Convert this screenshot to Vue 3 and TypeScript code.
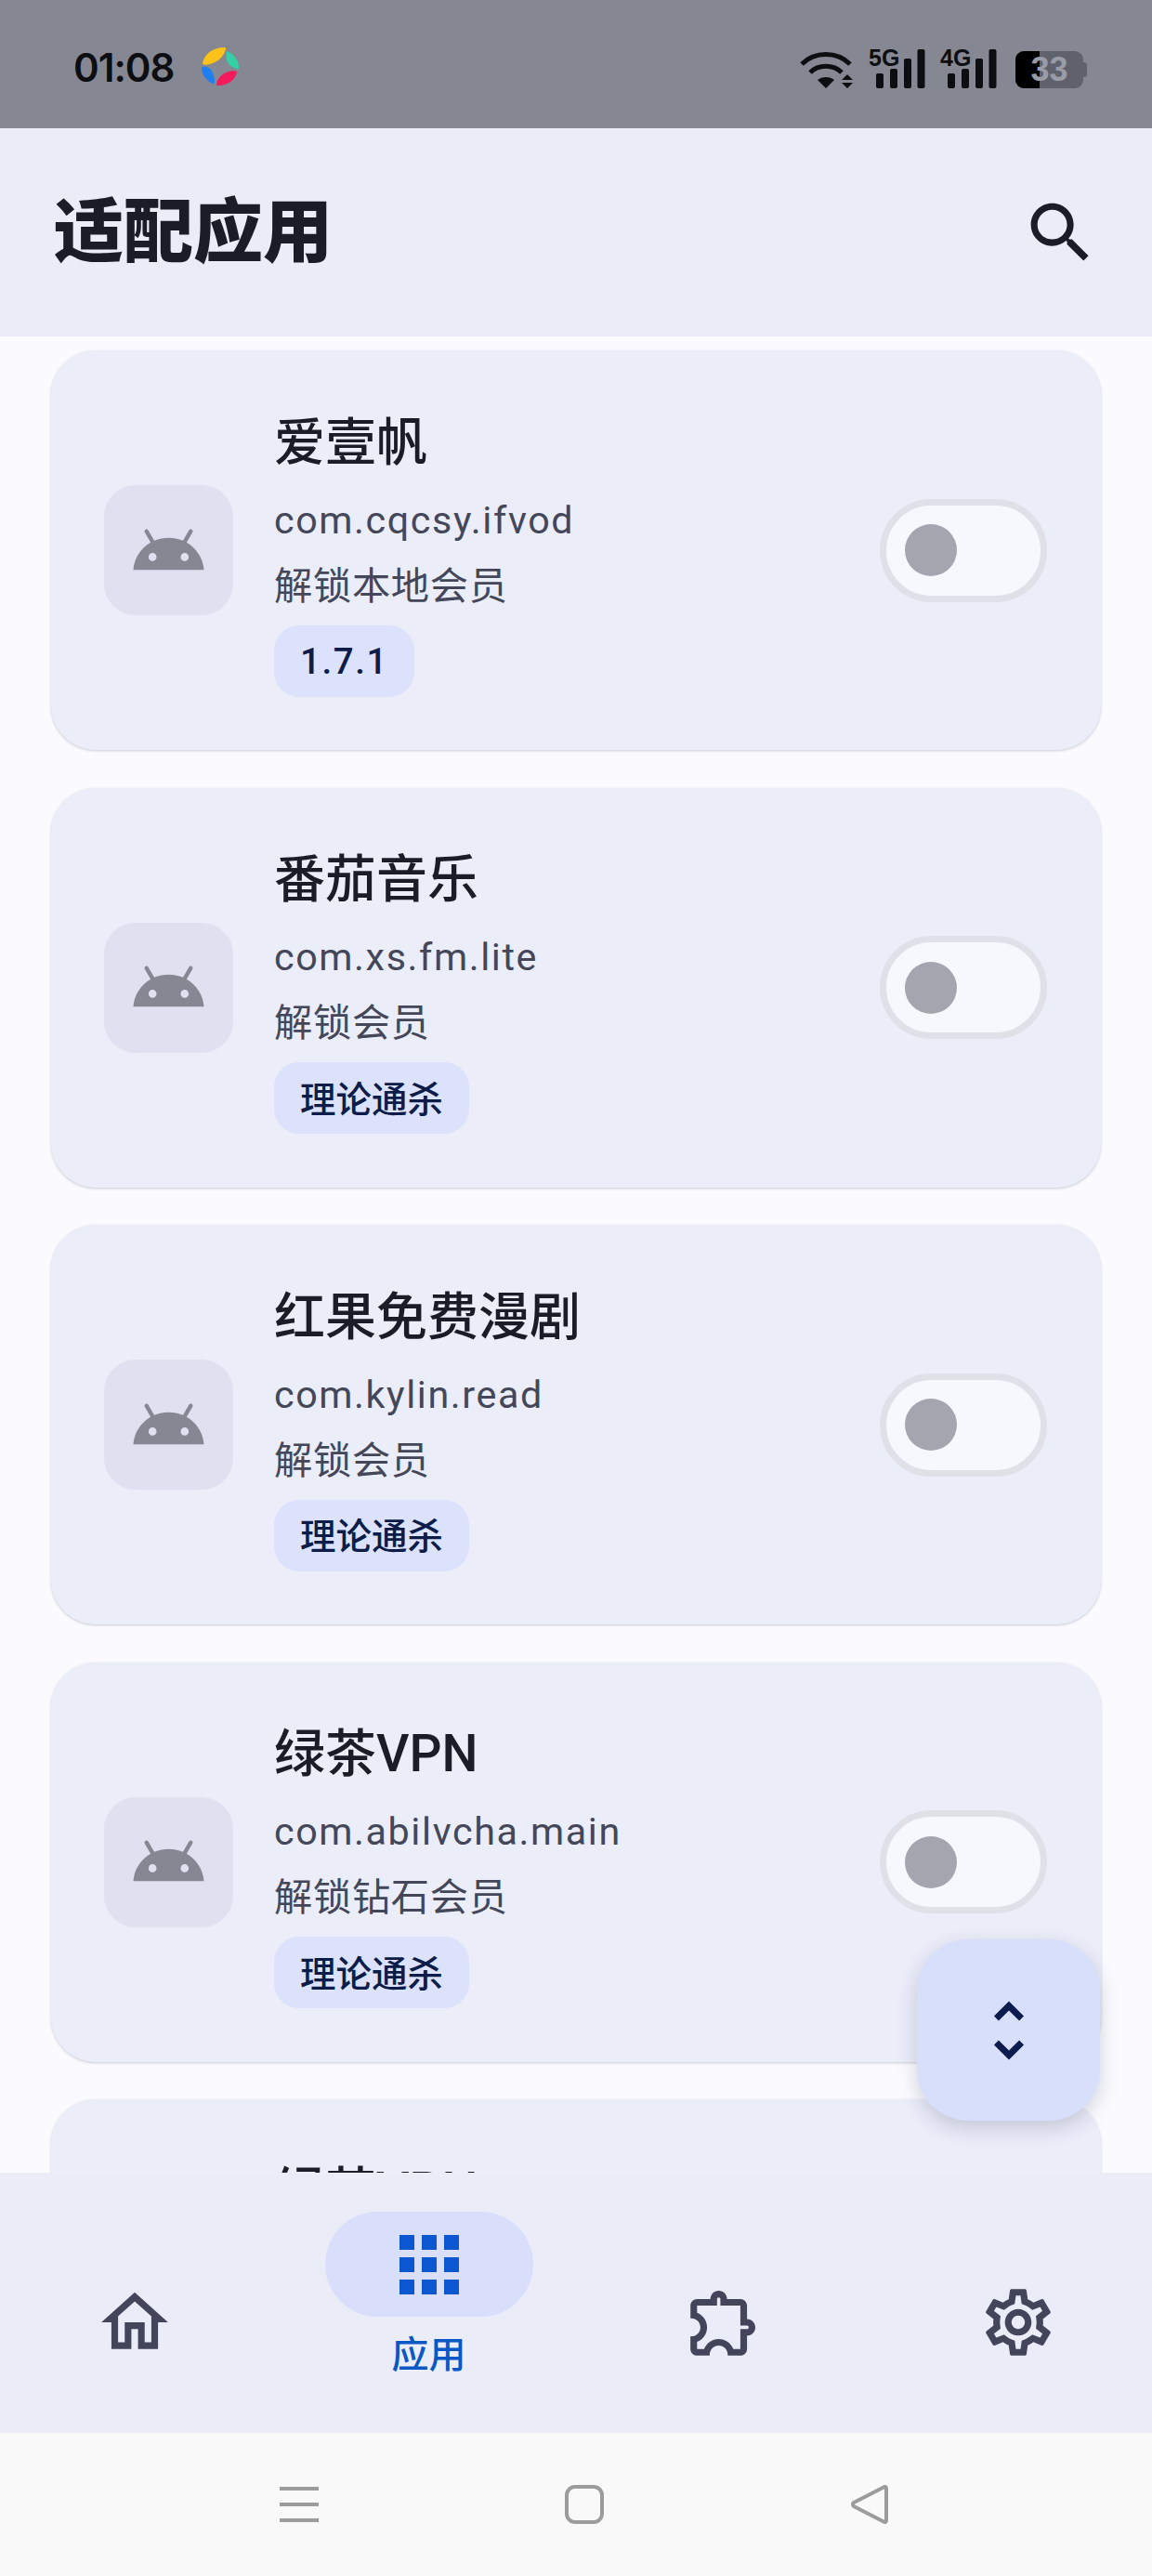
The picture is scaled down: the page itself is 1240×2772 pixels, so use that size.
<script setup lang="ts">
interface AppItem {
  name: string;
  pkg?: string;
  desc?: string;
  tag?: string;
}

const apps: AppItem[] = [
  { name: '爱壹帆', pkg: 'com.cqcsy.ifvod', desc: '解锁本地会员', tag: '1.7.1' },
  { name: '番茄音乐', pkg: 'com.xs.fm.lite', desc: '解锁会员', tag: '理论通杀' },
  { name: '红果免费漫剧', pkg: 'com.kylin.read', desc: '解锁会员', tag: '理论通杀' },
  { name: '绿茶VPN', pkg: 'com.abilvcha.main', desc: '解锁钻石会员', tag: '理论通杀' },
  // only the top of this one is visible above the nav bar
  { name: '绿茶VPN' }
];

const signals = ['5G', '4G'];
const bars = [
  { x: 8, h: 16 },
  { x: 23, h: 21 },
  { x: 38, h: 32 },
  { x: 52.5, h: 42 }
];

const isVersion = (tag: string) => /^[\d.]+$/.test(tag);
</script>

<template>
  <div class="phone">
    <header class="status-bar">
      <div class="status-left">
        <span class="time">01:08</span>
        <svg class="app-logo" viewBox="0 0 40 42">
          <path fill="#fbc21a" d="M1 19C2 9 11 1 25 1c1 0 2 1 1 2-2 8-9 14-17 16-3 1-6 1-8 0z" />
          <path fill="#35cfa6" d="M27 5c8 3 13 10 13 18 0 1-1 2-2 1-4-1-8-3-10-7-2-4-2-8-1-12z" />
          <path fill="#1f7ff0" d="M0 22c4-1 8 0 10 3 3 4 4 9 4 14 0 1-1 1-2 1C5 37 0 30 0 22z" />
          <path fill="#f41b5c" d="M16 41c1-7 6-12 13-14 4-1 7-1 9 0-1 8-9 15-20 15-1 0-2 0-2-1z" />
        </svg>
      </div>
      <div class="status-right">
        <svg class="wifi" viewBox="0 0 58 42">
          <path class="wifi-arc" d="M2 16C16 2 40 2 54 16" />
          <path class="wifi-arc" d="M11 25C20 16 36 16 45 25" />
          <path fill="#0d0e12" d="M19 33c5-4 13-4 18 0l-9 9z" />
          <path fill="#0d0e12" d="M45 33l6-6 6 6zM45 36h12l-6 6z" />
        </svg>
        <div v-for="s in signals" :key="s" class="signal">
          <span class="signal-label">{{ s }}</span>
          <svg viewBox="0 0 61 43">
            <rect v-for="b in bars" :key="b.x" :x="b.x" :y="43 - b.h" width="8" :height="b.h" rx="2" fill="#0d0e12" />
          </svg>
        </div>
        <div class="battery">
          <div class="battery-fill"></div>
          <span class="battery-text">33</span>
          <i class="battery-cap"></i>
        </div>
      </div>
    </header>

    <div class="top-bar">
      <h1 class="page-title">适配应用</h1>
      <svg class="search-icon" viewBox="0 0 24 24">
        <path d="M15.5 14h-.79l-.28-.27C15.41 12.59 16 11.11 16 9.5 16 5.91 13.09 3 9.5 3S3 5.91 3 9.5 5.91 16 9.5 16c1.61 0 3.09-.59 4.23-1.57l.27.28v.79l5 4.99L20.49 19l-4.99-5zm-6 0C7.01 14 5 11.99 5 9.5S7.01 5 9.5 5 14 7.01 14 9.5 11.99 14 9.5 14z" />
      </svg>
    </div>

    <main class="app-list">
      <section v-for="(app, i) in apps" :key="i" class="app-card">
        <div class="app-icon">
          <svg viewBox="0 0 24 24">
            <path d="M17.6 9.48l1.84-3.18c.16-.31.04-.69-.26-.85-.29-.15-.65-.06-.83.22l-1.88 3.24c-2.86-1.21-6.08-1.21-8.94 0L5.65 5.67c-.19-.29-.58-.38-.87-.2-.28.18-.37.54-.22.83L6.4 9.48C3.3 11.25 1.28 14.44 1 18h22c-.28-3.56-2.3-6.75-5.4-8.52zM7 15.25c-.69 0-1.25-.56-1.25-1.25s.56-1.25 1.25-1.25 1.25.56 1.25 1.25-.56 1.25-1.25 1.25zm10 0c-.69 0-1.25-.56-1.25-1.25s.56-1.25 1.25-1.25 1.25.56 1.25 1.25-.56 1.25-1.25 1.25z" />
          </svg>
        </div>
        <div class="app-info">
          <div class="app-name">{{ app.name }}</div>
          <div v-if="app.pkg" class="app-pkg">{{ app.pkg }}</div>
          <div v-if="app.desc" class="app-desc">{{ app.desc }}</div>
          <span v-if="app.tag" class="app-tag" :class="{ version: isVersion(app.tag) }">{{ app.tag }}</span>
        </div>
        <div class="switch"><i class="switch-thumb"></i></div>
      </section>
    </main>

    <button class="fab">
      <svg viewBox="0 0 24 24">
        <path d="M12 5.830L15.17 9l1.41-1.41L12 3 7.41 7.59 8.83 9 12 5.83zm0 12.34L8.83 15l-1.41 1.41L12 21l4.59-4.59L15.17 15 12 18.17z" />
      </svg>
    </button>

    <nav class="bottom-nav">
      <div class="nav-item">
        <svg class="nav-icon" viewBox="0 0 24 24">
          <path d="M12 5.69l5 4.5V18h-2v-6H9v6H7v-7.81l5-4.5M12 3L2 12h3v8h6v-6h2v6h6v-8h3L12 3z" />
        </svg>
      </div>
      <div class="nav-item active">
        <div class="nav-pill">
          <svg viewBox="0 0 24 24">
            <path d="M4 8h4V4H4v4zm6 12h4v-4h-4v4zm-6 0h4v-4H4v4zm0-6h4v-4H4v4zm6 0h4v-4h-4v4zm6-10v4h4V4h-4zm-6 4h4V4h-4v4zm6 6h4v-4h-4v4zm0 6h4v-4h-4v4z" />
          </svg>
        </div>
        <span class="nav-label">应用</span>
      </div>
      <div class="nav-item">
        <svg class="nav-icon" viewBox="0 0 24 24">
          <path d="M10.5 4.5c.28 0 .5.22.5.5v2h6v6h2c.28 0 .5.22.5.5s-.22.5-.5.5h-2v6h-2.12c-.68-1.75-2.39-3-4.38-3s-3.7 1.25-4.38 3H4v-2.12c1.75-.68 3-2.39 3-4.38 0-1.99-1.24-3.7-2.99-4.38L4 7h6V5c0-.28.22-.5.5-.5m0-2C9.12 2.5 8 3.62 8 5H4c-1.1 0-1.99.9-1.99 2v3.8h.29c1.49 0 2.7 1.21 2.7 2.7s-1.21 2.7-2.7 2.7H2V20c0 1.1.9 2 2 2h3.8v-.3c0-1.49 1.21-2.7 2.7-2.7s2.7 1.21 2.7 2.7v.3H17c1.1 0 2-.9 2-2v-4c1.38 0 2.5-1.12 2.5-2.5S20.38 11 19 11V7c0-1.1-.9-2-2-2h-4c0-1.38-1.12-2.5-2.5-2.5z" />
        </svg>
      </div>
      <div class="nav-item">
        <svg class="nav-icon" viewBox="0 0 24 24">
          <path d="M19.43 12.98c.04-.32.07-.64.07-.98 0-.34-.03-.66-.07-.98l2.11-1.65c.19-.15.24-.42.12-.64l-2-3.46c-.09-.16-.26-.25-.44-.25-.06 0-.12.01-.17.03l-2.49 1c-.52-.4-1.08-.73-1.69-.98l-.38-2.65C14.46 2.18 14.25 2 14 2h-4c-.25 0-.46.18-.49.42l-.38 2.65c-.61.25-1.17.59-1.69.98l-2.49-1c-.06-.02-.12-.03-.18-.03-.17 0-.34.09-.43.25l-2 3.46c-.13.22-.07.49.12.64l2.11 1.65c-.04.32-.07.65-.07.98 0 .33.03.66.07.98l-2.11 1.65c-.19.15-.24.42-.12.64l2 3.46c.09.16.26.25.44.25.06 0 .12-.01.17-.03l2.49-1c.52.4 1.08.73 1.69.98l.38 2.65c.03.24.24.42.49.42h4c.25 0 .46-.18.49-.42l.38-2.65c.61-.25 1.17-.59 1.69-.98l2.49 1c.06.02.12.03.18.03.17 0 .34-.09.43-.25l2-3.46c.12-.22.07-.49-.12-.64l-2.11-1.65zm-1.98-1.71c.04.31.05.52.05.73 0 .21-.02.43-.05.73l-.14 1.13.89.7 1.08.84-.7 1.21-1.27-.51-1.04-.42-.9.68c-.43.32-.84.56-1.25.73l-1.06.43-.16 1.13-.2 1.35h-1.4l-.19-1.35-.16-1.13-1.06-.43c-.43-.18-.83-.41-1.23-.71l-.91-.7-1.06.43-1.27.51-.7-1.21 1.08-.84.89-.7-.14-1.13c-.03-.31-.05-.54-.05-.74s.02-.43.05-.73l.14-1.13-.89-.7-1.08-.84.7-1.21 1.27.51 1.04.42.9-.68c.43-.32.84-.56 1.25-.73l1.06-.43.16-1.13.2-1.35h1.39l.19 1.35.16 1.13 1.06.43c.43.18.83.41 1.23.71l.91.7 1.06-.43 1.27-.51.7 1.21-1.07.85-.89.7.14 1.13zM12 8c-2.21 0-4 1.79-4 4s1.79 4 4 4 4-1.79 4-4-1.79-4-4-4zm0 6c-1.1 0-2-.9-2-2s.9-2 2-2 2 .9 2 2-.9 2-2 2z" />
        </svg>
      </div>
    </nav>

    <footer class="system-nav">
      <svg viewBox="0 0 42 42">
        <path d="M0 4h42M0 21h42M0 38h42" stroke-width="4" />
      </svg>
      <svg viewBox="0 0 42 42">
        <rect x="2" y="2" width="38" height="38" rx="9" stroke-width="4" />
      </svg>
      <svg viewBox="0 0 42 42">
        <path d="M39 3.5v35a1.5 1.5 0 0 1-2.4 1.2L4 23a2.4 2.4 0 0 1 0-4L36.600 2.300A1.500 1.500 0 0 1 39 3.500z" stroke-width="4" stroke-linejoin="round" />
      </svg>
    </footer>
  </div>
</template>

<style scoped>
.phone {
  position: relative;
  width: 1240px;
  height: 2772px;
  display: flex;
  flex-direction: column;
  overflow: hidden;
  background: #fbfbff;
  font-family: Roboto, "Noto Sans CJK SC", sans-serif;
}

.status-bar {
  height: 138px;
  flex: none;
  display: flex;
  justify-content: space-between;
  align-items: center;
  padding: 0 74px 0 79px;
  background: #858792;
}

.status-left {
  display: flex;
  align-items: center;
  gap: 30px;
}

.time {
  padding-top: 7px;
  font-family: Inter, sans-serif;
  font-size: 42px;
  font-weight: 600;
  letter-spacing: -1px;
  color: #0d0e12;
}

.app-logo {
  width: 40px;
  height: 42px;
  margin-top: 4px;
}

.status-right {
  display: flex;
  align-items: flex-end;
  height: 42px;
  margin-top: 10px;
}

.wifi {
  width: 58px;
  height: 42px;
  margin-right: 16px;
}

.wifi-arc {
  fill: none;
  stroke: #0d0e12;
  stroke-width: 5;
}

.signal {
  position: relative;
  width: 61px;
  height: 43px;
  margin-right: 16px;
}

.signal svg {
  display: block;
  width: 61px;
  height: 43px;
}

.signal-label {
  position: absolute;
  left: 0;
  top: 0;
  font-family: "Liberation Sans Narrow", "Liberation Sans", sans-serif;
  font-size: 25px;
  line-height: 20px;
  font-weight: 700;
  color: #0d0e12;
}

.battery {
  position: relative;
  width: 73px;
  height: 40px;
  margin-left: 4px;
  display: flex;
  align-items: center;
  justify-content: center;
  border-radius: 9px;
  background: #5f616c;
}

.battery-fill {
  position: absolute;
  left: 0;
  top: 0;
  bottom: 0;
  width: 26px;
  border-radius: 9px 0 0 9px;
  background: #000;
}

.battery-text {
  position: relative;
  font-family: "Liberation Sans Narrow", "Liberation Sans", sans-serif;
  font-size: 36px;
  line-height: 40px;
  font-weight: 700;
  color: #9a9ca8;
}

.battery-cap {
  position: absolute;
  right: -4px;
  top: 12px;
  width: 4px;
  height: 16px;
  border-radius: 0 3px 3px 0;
  background: #5f616c;
}

.top-bar {
  height: 224px;
  flex: none;
  display: flex;
  justify-content: space-between;
  align-items: center;
  padding: 0 56px 0 58px;
  background: #eaecf8;
}

.page-title {
  margin: -13px 0 0;
  font-size: 75px;
  font-weight: 900;
  color: #1a1c28;
}

.search-icon {
  width: 85px;
  height: 85px;
  fill: #1a1c28;
}

.app-list {
  flex: 1;
  min-height: 0;
  display: flex;
  flex-direction: column;
  gap: 40.5px;
  padding: 15px 55px 0;
  overflow: hidden;
}

.app-card {
  flex: none;
  height: 430px;
  display: flex;
  align-items: center;
  gap: 44px;
  padding: 0 58px 0 57px;
  border-radius: 48px;
  background: #ebedf9;
  box-shadow: 0 1px 3px rgba(40, 40, 70, 0.24);
}

.app-icon {
  flex: none;
  width: 139px;
  height: 140px;
  display: flex;
  align-items: center;
  justify-content: center;
  border-radius: 34px;
  background: #dfe1f0;
}

.app-icon svg {
  width: 83px;
  height: 83px;
  fill: #858792;
}

.app-info {
  flex: 1;
  min-width: 0;
  height: 315px;
  display: flex;
  flex-direction: column;
  align-items: flex-start;
}

.app-name {
  font-size: 55px;
  line-height: 82px;
  font-weight: 500;
  color: #1a1c28;
}

.app-pkg {
  margin-top: 14px;
  font-size: 41.25px;
  line-height: 58px;
  letter-spacing: 1.6px;
  color: #44475a;
}

.app-desc {
  margin-top: 13px;
  font-size: 41.25px;
  line-height: 58px;
  letter-spacing: 0.7px;
  color: #44475a;
}

.app-tag {
  box-sizing: border-box;
  margin-top: 13px;
  height: 77px;
  display: flex;
  align-items: center;
  padding: 0 28px 4px;
  border-radius: 27px;
  background: #dce1fc;
  font-size: 38.5px;
  font-weight: 500;
  color: #0d1c48;
}

.app-tag.version {
  padding-bottom: 0;
  letter-spacing: 1.6px;
}

.switch {
  flex: none;
  box-sizing: border-box;
  width: 180px;
  height: 111px;
  display: flex;
  align-items: center;
  padding-left: 20px;
  border: 7px solid #e0e0e9;
  border-radius: 56px;
  background: #f7f7fe;
}

.switch-thumb {
  width: 56px;
  height: 56px;
  border-radius: 50%;
  background: #a5a5b0;
}

.fab {
  position: absolute;
  right: 56px;
  bottom: 490px;
  width: 197px;
  height: 195px;
  display: flex;
  align-items: center;
  justify-content: center;
  padding: 0;
  border: none;
  border-radius: 55px;
  background: #d8dffb;
  box-shadow: 0 8px 22px rgba(40, 44, 80, 0.2);
}

.fab svg {
  width: 84px;
  height: 84px;
  fill: #0d1c4f;
}

.bottom-nav {
  height: 280px;
  flex: none;
  display: grid;
  grid-template-columns: repeat(4, 317px);
  justify-content: center;
  background: #eaecf8;
}

.nav-item {
  display: flex;
  flex-direction: column;
  align-items: center;
  padding-top: 118px;
}

.nav-item.active {
  padding-top: 42px;
}

.nav-icon {
  width: 86px;
  height: 86px;
  fill: #43465a;
}

.nav-pill {
  width: 224px;
  height: 113px;
  display: flex;
  align-items: center;
  justify-content: center;
  border-radius: 57px;
  background: #d9dffb;
}

.nav-pill svg {
  width: 96px;
  height: 96px;
  fill: #0c57d0;
}

.nav-label {
  margin-top: 13px;
  font-size: 40px;
  line-height: 58px;
  font-weight: 500;
  color: #0b57c4;
}

.system-nav {
  height: 154px;
  flex: none;
  display: flex;
  align-items: center;
  justify-content: center;
  gap: 265px;
  padding-left: 18px;
  background: #f9f9f9;
}

.system-nav svg {
  width: 42px;
  height: 42px;
  fill: none;
  stroke: #9c9c9c;
}
</style>

<style>
html,
body {
  margin: 0;
  padding: 0;
}
</style>
